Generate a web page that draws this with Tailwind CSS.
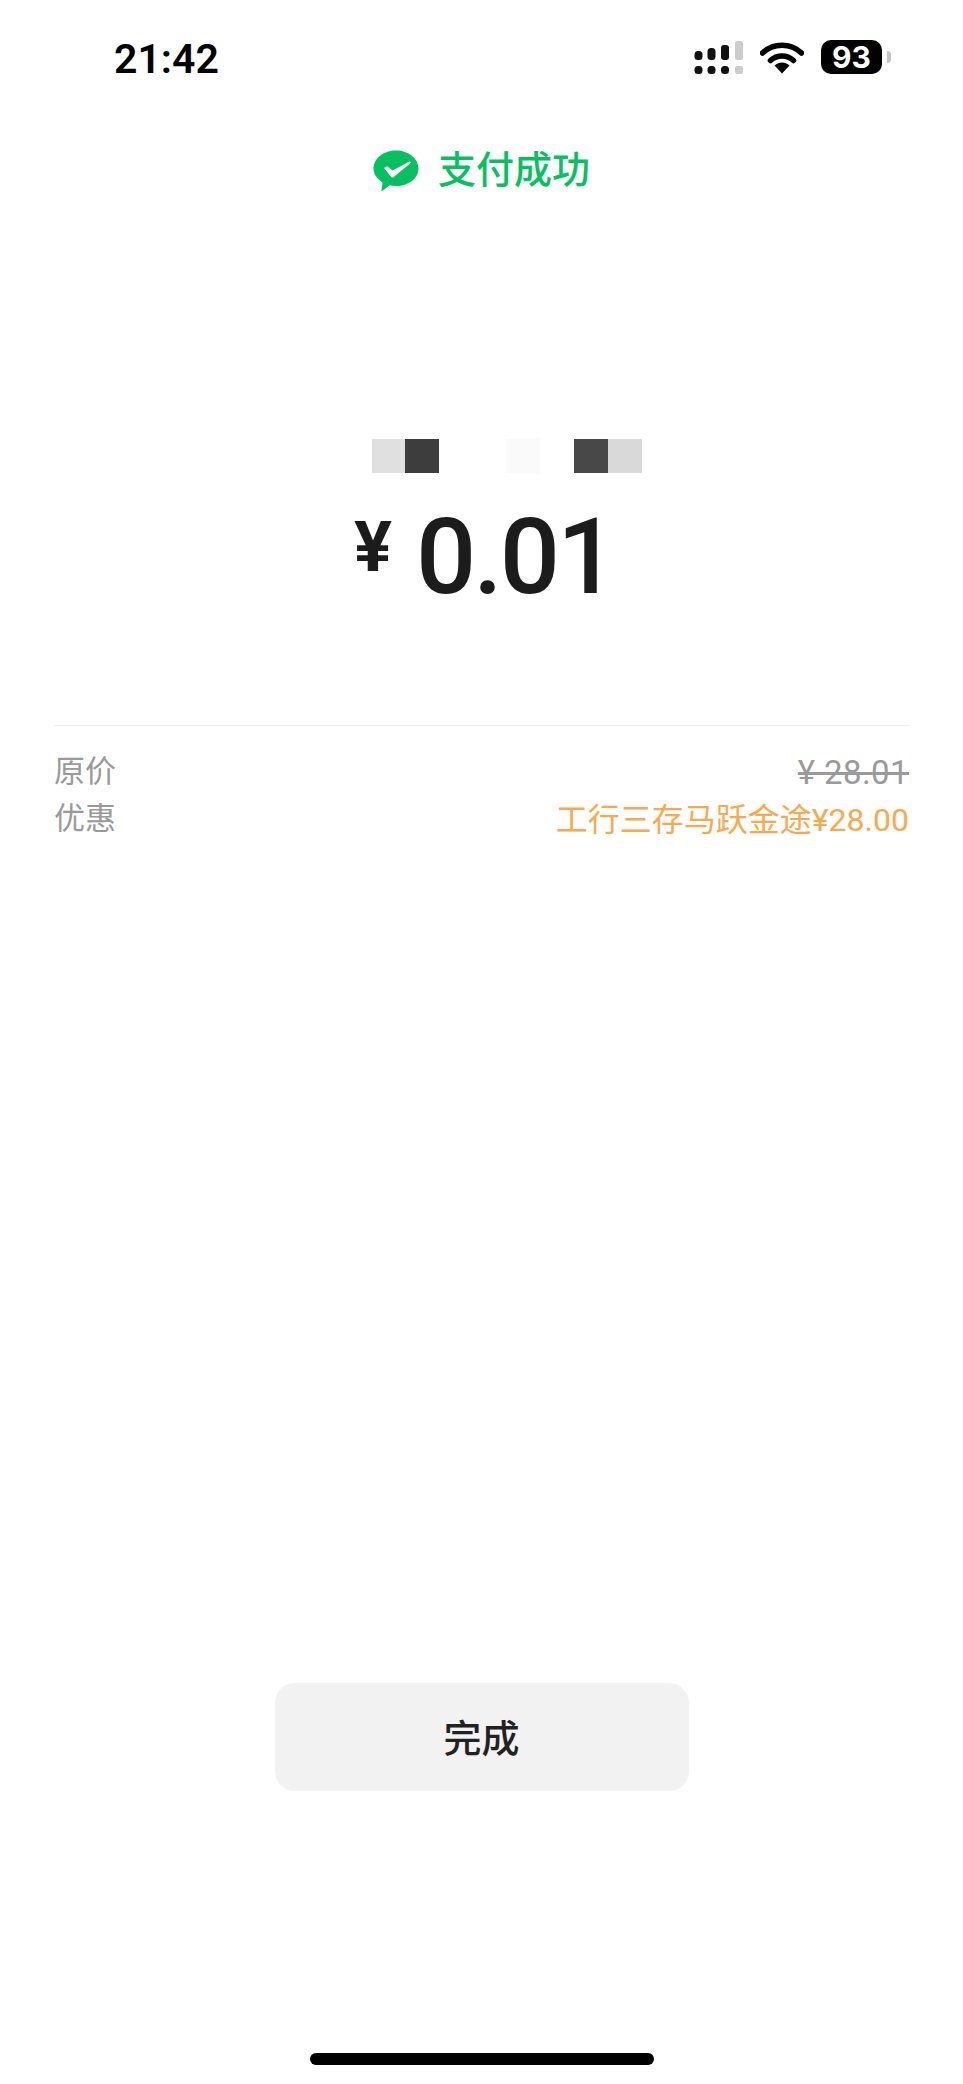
<!DOCTYPE html>
<html lang="zh-CN">
<head>
    <meta charset="UTF-8">
    <meta name="viewport" content="width=device-width, initial-scale=1.0">
    <title>支付成功</title>
    <script src="https://cdn.jsdelivr.net/npm/@tailwindcss/browser@4"></script>
</head>
<body class="bg-white font-['Roboto','Noto_Sans_CJK_SC',sans-serif]">
    <div class="w-[963px] h-[2084px] flex flex-col overflow-hidden">
        <!-- status bar -->
        <div class="h-[146px] pt-[37px] pl-[114px] pr-[72px] flex justify-between items-start shrink-0">
            <div class="text-[41px] leading-[44px] font-semibold text-black">21:42</div>
            <div class="flex items-center pt-[3px]">
                <svg width="50" height="33" viewBox="0 0 50 33">
                    <rect x="0.5" y="25" width="8" height="8" rx="3.5" fill="#111"/>
                    <rect x="13.5" y="25" width="8" height="8" rx="3.5" fill="#111"/>
                    <rect x="27" y="25" width="8" height="8" rx="3.5" fill="#111"/>
                    <rect x="41" y="25" width="8" height="8" rx="2" fill="#ccc"/>
                    <rect x="0.5" y="10" width="8" height="9" rx="3.5" fill="#111"/>
                    <rect x="13.5" y="7" width="8" height="12" rx="3.5" fill="#111"/>
                    <rect x="27" y="4" width="8" height="15" rx="3" fill="#111"/>
                    <rect x="41" y="0" width="8" height="19" rx="2.5" fill="#ccc"/>
                </svg>
                <svg class="ml-[16px]" width="44" height="33" viewBox="0 0 44 33">
                    <path d="M2.5 12 C13 1.5 31 1.5 41.5 12" fill="none" stroke="#000" stroke-width="5.5" stroke-linecap="round"/>
                    <path d="M10.5 19.5 C17 13.5 27 13.5 33.5 19.5" fill="none" stroke="#000" stroke-width="5.5" stroke-linecap="round"/>
                    <path d="M14.5 24.5 C19 20.5 25 20.5 29.5 24.5 L22 32.5 Z" fill="#000"/>
                </svg>
                <div class="ml-[17px] w-[61px] h-[34px] rounded-[10px] bg-black text-white flex items-center justify-center text-[30px] font-bold font-['Inter','Roboto',sans-serif]">93</div>
                <div class="ml-[5px] w-[4px] h-[12px] rounded-r-[4px] bg-[#c4c4c4]"></div>
            </div>
        </div>

        <!-- result title -->
        <div class="h-[49px] flex items-center justify-center gap-[19px] shrink-0">
            <svg width="46" height="42" viewBox="0 0 46 42">
                <path d="M23 0.5 C35.4 0.5 45.5 8.5 45.5 18.5 C45.5 28.5 35.4 36 23 36 C20.8 36 18.7 35.8 16.7 35.3 L9.5 40.8 C9 41.2 8.4 40.9 8.5 40.2 L9.6 32.4 C4 29 0.5 24.1 0.5 18.5 C0.5 8.5 10.6 0.5 23 0.5 Z" fill="#07c160"/>
                <path d="M11 18 L14.2 16.2 L19.6 20.4 L36.8 11.2 L38 12.8 L20.4 27.2 C19.6 27.8 18.8 27.7 18.2 27 Z" fill="#fff"/>
            </svg>
            <div class="text-[38px] leading-[49px] font-medium text-[#07c160]">支付成功</div>
        </div>

        <!-- payee, pixelated -->
        <div class="mt-[244px] pl-[372px] flex shrink-0">
            <div class="w-[33px] h-[34px] bg-[#e0e0e0]"></div>
            <div class="w-[34px] h-[34px] bg-[#3d3d3d]"></div>
            <div class="w-[67px] h-[34px]"></div>
            <div class="w-[34px] h-[34px] bg-[#fafafa]"></div>
            <div class="w-[34px] h-[34px]"></div>
            <div class="w-[34px] h-[34px] bg-[#484848]"></div>
            <div class="w-[34px] h-[34px] bg-[#d9d9d9]"></div>
        </div>

        <!-- amount -->
        <div class="mt-[28px] h-[112px] pl-[354px] flex items-start text-[#1c1c1c] shrink-0">
            <div class="w-[62px] pt-[5px] text-[71px] leading-[82px] font-bold">¥</div>
            <div class="text-[106px] leading-[112px] font-medium tracking-[-3px]">0.01</div>
        </div>

        <!-- details -->
        <div class="mt-[112px] mx-[54px] border-t border-[#efefef] pt-[23px] shrink-0">
            <div class="flex justify-between items-center h-[47px] text-[31px] text-[#9a9a9a]">
                <div>原价</div>
                <div class="line-through text-[33px] tracking-[0.4px]">¥ 28.01</div>
            </div>
            <div class="flex justify-between items-center h-[47px] text-[31px]">
                <div class="text-[#9a9a9a]">优惠</div>
                <div class="text-[#f8a94f] text-[32px]">工行三存马跃金途¥28.00</div>
            </div>
        </div>

        <div class="flex-1"></div>

        <!-- done button -->
        <div class="flex justify-center shrink-0">
            <button class="w-[414px] h-[108px] pt-[4px] rounded-[20px] bg-[#f2f2f2] text-[38px] font-medium text-[#222]">完成</button>
        </div>

        <!-- home indicator -->
        <div class="mt-[262px] mb-[19px] w-[344px] h-[12px] rounded-full bg-black self-center shrink-0"></div>
    </div>
</body>
</html>
